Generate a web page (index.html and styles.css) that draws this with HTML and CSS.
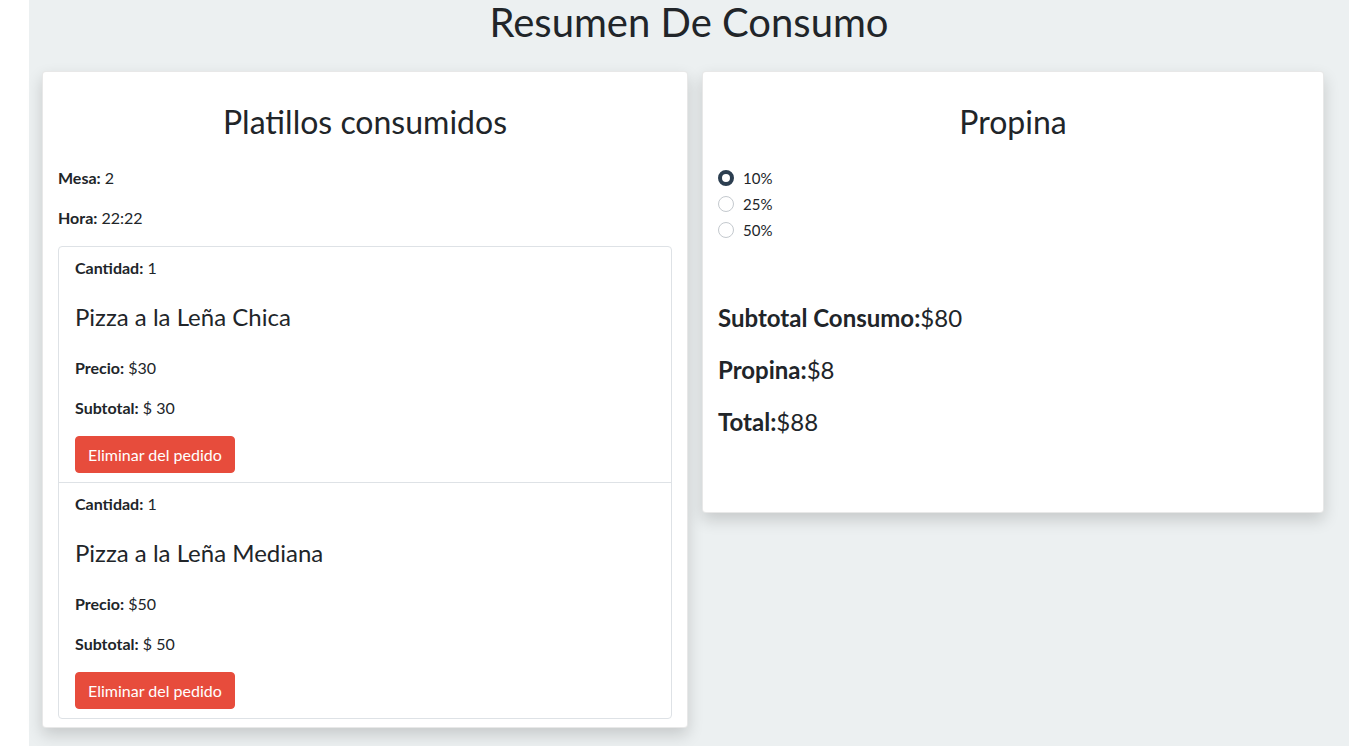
FILE: index.html
```html
<!DOCTYPE html>
<html lang="es">
<head>
<meta charset="utf-8">
<title>Resumen De Consumo</title>
<link rel="stylesheet" href="styles.css">
</head>
<body>
<main class="page">
  <h1 class="page-title">Resumen De Consumo</h1>
  <div class="layout">
    <section class="card card-left">
      <h2 class="card-title">Platillos consumidos</h2>
      <p class="info"><strong>Mesa:</strong> 2</p>
      <p class="info"><strong>Hora:</strong> 22:22</p>
      <ul class="list">
        <li class="item">
          <p class="info"><strong>Cantidad:</strong> 1</p>
          <h3 class="dish">Pizza a la Leña Chica</h3>
          <p class="info"><strong>Precio:</strong> $30</p>
          <p class="info"><strong>Subtotal:</strong> $ 30</p>
          <button class="btn-danger" type="button">Eliminar del pedido</button>
        </li>
        <li class="item">
          <p class="info"><strong>Cantidad:</strong> 1</p>
          <h3 class="dish">Pizza a la Leña Mediana</h3>
          <p class="info"><strong>Precio:</strong> $50</p>
          <p class="info"><strong>Subtotal:</strong> $ 50</p>
          <button class="btn-danger" type="button">Eliminar del pedido</button>
        </li>
      </ul>
    </section>
    <section class="card card-right">
      <h2 class="card-title">Propina</h2>
      <div class="radios">
        <label class="radio"><span class="dot checked"></span>10%</label>
        <label class="radio"><span class="dot"></span>25%</label>
        <label class="radio"><span class="dot"></span>50%</label>
      </div>
      <div class="totals">
        <p class="total-line"><strong>Subtotal Consumo:</strong>$80</p>
        <p class="total-line"><strong>Propina:</strong>$8</p>
        <p class="total-line"><strong>Total:</strong>$88</p>
      </div>
    </section>
  </div>
</main>
</body>
</html>
```

FILE: styles.css
```css
* { box-sizing: border-box; }
html, body { margin: 0; padding: 0; background: #fff; }
body {
  font-family: Lato, "Open Sans", sans-serif;
  color: #212529;
  font-size: 16px;
}
.page {
  margin-left: 29px;
  width: 1320px;
  min-height: 746px;
  background: #ecf0f1;
  padding: 0 25px 0 13px;
}
.page-title {
  margin: 0 -25px 0 -13px;
  font-size: 40px;
  font-weight: 400;
  line-height: 44px;
  text-align: center;
}
.layout {
  margin-top: 27px;
  display: grid;
  grid-template-columns: 646px 622px;
  column-gap: 14px;
  align-items: start;
}
.card {
  background: #fff;
  border: 1px solid rgba(0,0,0,0.09);
  border-radius: 4px;
  box-shadow: 0 7px 16px rgba(0,0,0,0.16);
  padding: 15px 15px 8px;
}
.card-right { padding-bottom: 76px; }
.card-title {
  margin: 16px 0 25px;
  font-size: 32px;
  font-weight: 400;
  line-height: 38px;
  text-align: center;
}
.card-right .card-title { margin-bottom: 26px; }
.info {
  margin: 0 0 16px;
  line-height: 24px;
}
.info strong { font-weight: 700; }
.list {
  list-style: none;
  margin: 0;
  padding: 0;
  border: 1px solid #dee2e6;
  border-radius: 4px;
}
.item {
  padding: 9px 16px;
}
.item + .item { border-top: 1px solid #dee2e6; }
.dish {
  margin: 22px 0 25px;
  font-size: 24px;
  font-weight: 400;
  line-height: 29px;
}
.btn-danger {
  font-family: inherit;
  font-size: 16px;
  line-height: 23px;
  color: #fff;
  background: #e74c3c;
  border: 1px solid #e74c3c;
  border-radius: 4px;
  padding: 6px 12px;
  cursor: pointer;
}
.radios {
  display: flex;
  flex-direction: column;
  margin-top: -2px;
  font-size: 15px;
}
.radio {
  display: flex;
  align-items: center;
  gap: 9px;
  height: 26px;
  line-height: 26px;
}
.dot {
  width: 16px;
  height: 16px;
  border-radius: 50%;
  border: 1px solid #c4c9ce;
  background: #fff;
}
.dot.checked {
  border: 4px solid #2c3e50;
}
.totals { margin-top: 61px; }
.total-line {
  margin: 0 0 24px;
  font-size: 24px;
  line-height: 28px;
}
.total-line:last-child { margin-bottom: 0; }
```
